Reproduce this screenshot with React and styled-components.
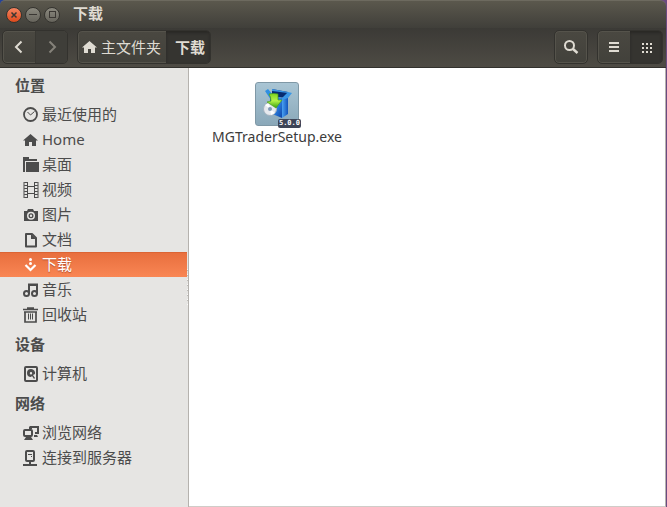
import React, { useState } from 'react'
import { styled, css, createGlobalStyle } from 'styled-components'

const GlobalStyle = createGlobalStyle`
  * {
    box-sizing: border-box;
  }
  body {
    margin: 0;
    background: linear-gradient(90deg, #24439a 50%, #6b4a80 50%);
    font-family: 'Noto Sans', 'Noto Sans CJK SC', sans-serif;
    font-size: 15px;
  }
  button {
    font: inherit;
    margin: 0;
    padding: 0;
    border: none;
    background: none;
  }
`

const Window = styled.div`
  display: flex;
  flex-direction: column;
  min-height: 100vh;
  margin-right: 1px;
`

const TitleBar = styled.header`
  display: flex;
  align-items: center;
  gap: 3px;
  height: 28px;
  padding: 0 6px;
  border-radius: 5px 6px 0 0;
  border-top: 1px solid #6d6a5f;
  background: linear-gradient(#5b584d, #403f3a);
`

const WindowButton = styled.button`
  display: flex;
  width: 16px;
  height: 16px;
  border-radius: 50%;
  border: 1px solid #35342f;
  background: ${(p) =>
    p.$close
      ? 'linear-gradient(#f58460, #dd4a1c)'
      : 'linear-gradient(#8b897f, #66645c)'};

  svg {
    width: 14px;
    height: 14px;
    fill: none;
    stroke: #3a3733;
  }
`

const Title = styled.h1`
  margin: 0 0 0 10px;
  padding-bottom: 3px;
  font-size: 15px;
  line-height: 20px;
  font-weight: bold;
  color: #dfdbd2;
`

const Toolbar = styled.nav`
  display: flex;
  align-items: center;
  gap: 9px;
  height: 40px;
  padding: 0 3px 1px 2px;
  background: linear-gradient(#3b3a36, #4e4b44);
  border-bottom: 1px solid #32312d;
`

const Spacer = styled.div`
  flex: 1;
`

const ButtonGroup = styled.div`
  display: flex;
  height: 34px;
  border: 1px solid #33322e;
  border-radius: 5px;
  overflow: hidden;
  background: linear-gradient(#4a4841, #42413b);
  box-shadow: inset 0 0 0 1px #55534b;
`

const ToolButton = styled.button`
  display: flex;
  align-items: center;
  justify-content: center;
  gap: 3px;
  min-width: 32px;
  padding: ${(p) => (p.$text ? '0 5px 0 4px' : '0')};
  color: #dfdbd2;
  line-height: 20px;

  svg {
    width: 16px;
    height: 16px;
    flex: none;
  }

  ${(p) =>
    p.$dim &&
    css`
      color: #85827a;
      border-left: 1px solid #393833;
      background: #3f3e39;
    `}

  ${(p) =>
    p.$pressed &&
    css`
      padding: ${p.$text ? '0 5px 0 9px' : '0'};
      font-weight: bold;
      background: #353430;
      box-shadow: inset 0 2px 3px #292825;
    `}
`

const Body = styled.div`
  display: flex;
  flex: 1;
`

const Sidebar = styled.aside`
  display: flex;
  flex: none;
  width: 189px;
  background: #e6e5e3;
  border-right: 1px solid #b5b2ae;
`

const Places = styled.div`
  flex: 1;
`

const Handle = styled.div`
  align-self: center;
  width: 1px;
  height: 36px;
  margin-bottom: 2px;
  background: repeating-linear-gradient(#fafafa 0 1px, #bdbbb8 1px 2px, #e6e5e3 2px 5px);
`

const Heading = styled.h2`
  margin: 0;
  padding: 1px 0 1px 15px;
  font-size: 15px;
  line-height: 32px;
  font-weight: bold;
  color: #4c4c4c;
`

const List = styled.ul`
  margin: 0;
  padding: 0;
  list-style: none;
`

const Place = styled.button`
  display: flex;
  align-items: center;
  gap: 3px;
  width: 100%;
  height: 25px;
  padding-left: 23px;
  line-height: 22px;
  color: #4c4c4c;

  svg {
    width: 16px;
    height: 16px;
    flex: none;
  }

  ${(p) =>
    p.$active &&
    css`
      color: #fff;
      background: linear-gradient(#dc6434 1px, #e86f3e 1px, #f98654);
      text-shadow: 0 1px 1px #b55230;
    `}
`

const PlaceLabel = styled.span`
  padding-bottom: 2px;
`

const Content = styled.main`
  flex: 1;
  display: flex;
  align-items: flex-start;
  padding: 14px;
  background: #fff;
  border-right: 1px solid #b5b2ae;
  border-bottom: 1px solid #cfccc8;
`

const File = styled.button`
  display: flex;
  flex-direction: column;
  align-items: center;
  width: 148px;
  color: #3c3c3c;
  font-size: 14px;
  line-height: 22px;
`

const Thumb = styled.span`
  position: relative;
  display: flex;
  width: 44px;
  height: 44px;
  border: 1px solid #7f98a6;
  border-radius: 3px;
  background: linear-gradient(#a9c5d4, #8aa8b9);
`

const Version = styled.span`
  position: absolute;
  right: -3px;
  bottom: -3px;
  padding: 0 1px;
  border-radius: 2px;
  background: #3e4557;
  color: #fff;
  font: bold 7px/9px 'DejaVu Sans Mono', monospace;
`

const icons = {
  recent: (
    <>
      <circle cx="7.5" cy="7.5" r="6.5" fill="none" stroke="currentColor" strokeWidth="1.8" />
      <path d="M4.5 5l3 3 4-3.5" fill="none" stroke="currentColor" />
    </>
  ),
  home: <path d="M7.5 2L0 8.5h2V14h4v-4h3v4h4V8.5h2z" fill="currentColor" />,
  desktop: (
    <>
      <path d="M0 0h6v2h8v2H2v11H0z" fill="currentColor" />
      <path d="M3 5h13v10H3z" fill="currentColor" />
    </>
  ),
  video: (
    <>
      <path d="M1 0v16M4.5 0v16M11.5 0v16M15 0v16M4.5 4.5h7M4.5 11.5h7" fill="none" stroke="currentColor" />
      <path d="M2.7 0v16M13.3 0v16" fill="none" stroke="currentColor" strokeWidth="3" strokeDasharray="1 2" />
    </>
  ),
  picture: (
    <path
      d="M5 2h5l1 2h4v10H1V4h3zM8 4.7a4 4 0 100 8 4 4 0 000-8zm0 1.6a2.5 2.5 0 110 5 2.5 2.5 0 010-5zM8 7.6a1.2 1.2 0 100 2.4 1.2 1.2 0 000-2.4z"
      fill="currentColor"
      fillRule="evenodd"
    />
  ),
  document: (
    <>
      <path d="M3 2h6l4 4v8.5H3z" fill="none" stroke="currentColor" strokeWidth="2" strokeLinejoin="round" />
      <path d="M8 2v5h5z" fill="currentColor" />
    </>
  ),
  download: (
    <>
      <circle cx="7.5" cy="2.5" r="1.5" fill="currentColor" />
      <circle cx="7.5" cy="6.5" r="1.5" fill="currentColor" />
      <path d="M2.5 8l5 5 5-5" fill="none" stroke="currentColor" strokeWidth="2.2" />
    </>
  ),
  music: (
    <>
      <path d="M5 1.5h10V12h-2V4H7v8H5z" fill="currentColor" />
      <circle cx="3.5" cy="11.5" r="2.5" fill="none" stroke="currentColor" strokeWidth="2" />
      <circle cx="11.5" cy="11.5" r="2.5" fill="none" stroke="currentColor" strokeWidth="2" />
    </>
  ),
  trash: (
    <>
      <path d="M0 2.5h15M4 1h7M2 5h11v10H2zM1 5h13" fill="none" stroke="currentColor" strokeWidth="1.7" />
      <path d="M5.5 6.5v6M7.5 6.5v6M9.5 6.5v6" fill="none" stroke="currentColor" />
    </>
  ),
  computer: (
    <>
      <rect x="2" y="1" width="12" height="14" rx="1" fill="none" stroke="currentColor" strokeWidth="2" />
      <path
        d="M8 3a4 4 0 100 8l1-1 2 3 1-1-2-3 2-1a4 4 0 00-4-5zm0 3a1.2 1.2 0 110 2.4A1.2 1.2 0 018 6z"
        fill="currentColor"
        fillRule="evenodd"
      />
    </>
  ),
  network: (
    <>
      <path d="M7 1h9v8h-4V7h2V3H9v1H6V2zM11 10h3l1 2h-4z" fill="currentColor" />
      <rect x="1" y="5" width="8" height="6" rx="1" fill="none" stroke="currentColor" strokeWidth="2" />
      <path d="M3 12h5l2 3H1z" fill="currentColor" />
    </>
  ),
  server: (
    <>
      <rect x="3" y="1" width="8" height="10" rx="1" fill="none" stroke="currentColor" strokeWidth="2" />
      <path d="M5 4h4v1H5zM8 6h1v1H8zM6 12h2v2h6v2H0v-2h6z" fill="currentColor" />
    </>
  ),
  back: <path d="M10.5 2.5L5 8l5.5 5.5" fill="none" stroke="currentColor" strokeWidth="2" />,
  forward: <path d="M5.5 2.5L11 8l-5.5 5.5" fill="none" stroke="currentColor" strokeWidth="2" />,
  search: (
    <>
      <circle cx="6.5" cy="6.5" r="4.5" fill="none" stroke="currentColor" strokeWidth="2" />
      <path d="M10 10l4.5 4" fill="none" stroke="currentColor" strokeWidth="2.5" />
    </>
  ),
  list: <path d="M3 3h10v2H3zM3 7h10v2H3zM3 11h10v2H3z" fill="currentColor" />,
  grid: (
    <path
      d="M4 4h2v2H4zM8 4h2v2H8zM12 4h2v2h-2zM4 8h2v2H4zM8 8h2v2H8zM12 8h2v2h-2zM4 12h2v2H4zM8 12h2v2H8zM12 12h2v2h-2z"
      fill="currentColor"
    />
  ),
}

const Icon = ({ name }) => (
  <svg viewBox="0 0 16 16" aria-hidden="true">
    {icons[name]}
  </svg>
)

const SetupIcon = () => (
  <svg width="42" height="42" viewBox="0 0 42 42" aria-hidden="true">
    <defs>
      <linearGradient id="box" x2="1" y2="1">
        <stop offset="0" stopColor="#0d45a8" />
        <stop offset=".5" stopColor="#2f86e6" />
        <stop offset="1" stopColor="#0d45a8" />
      </linearGradient>
      <linearGradient id="side" x2="1">
        <stop offset="0" stopColor="#4aa2f2" />
        <stop offset="1" stopColor="#1255bd" />
      </linearGradient>
      <linearGradient id="arrow" x2="0" y2="1">
        <stop offset="0" stopColor="#7ed321" />
        <stop offset=".5" stopColor="#b4f24a" />
        <stop offset="1" stopColor="#35a00c" />
      </linearGradient>
    </defs>
    <path d="M9 8l3-2 5 6-2 5z" fill="#2f8fe2" />
    <path d="M16 6l16 3-3 6-13-2z" fill="#082c70" />
    <path d="M14 12l12 3v20l-12-5z" fill="url(#box)" />
    <path d="M26 15l6-3v19l-6 4z" fill="url(#side)" />
    <path d="M26 15l6-6 4 1-4 5-6 2zM16 6l16 3v1L16 8z" fill="#3b97e6" />
    <circle cx="14" cy="26" r="6.5" fill="#e6e9ee" stroke="#a6b3c0" />
    <path d="M14 26l-5-4 4-2zM14 26l5 4-4 2z" fill="#fff" />
    <circle cx="14" cy="26" r="2" fill="#7f99b5" />
    <path d="M13 11q5-1 9 0v6h4l-6 8-9-6 4-1q0-4-2-7z" fill="url(#arrow)" stroke="#479d18" strokeWidth=".7" />
  </svg>
)

const sections = [
  {
    title: '位置',
    items: [
      ['recent', '最近使用的'],
      ['home', 'Home'],
      ['desktop', '桌面'],
      ['video', '视频'],
      ['picture', '图片'],
      ['document', '文档'],
      ['download', '下载'],
      ['music', '音乐'],
      ['trash', '回收站'],
    ],
  },
  { title: '设备', items: [['computer', '计算机']] },
  {
    title: '网络',
    items: [
      ['network', '浏览网络'],
      ['server', '连接到服务器'],
    ],
  },
]

const App = () => {
  const [place, setPlace] = useState('download')
  const [view, setView] = useState('grid')

  return (
    <>
      <GlobalStyle />
      <Window>
        <TitleBar>
          <WindowButton $close aria-label="关闭">
            <svg viewBox="0 0 14 14"><path d="M4.5 4.5l5 5M9.5 4.5l-5 5" strokeWidth="1.5" /></svg>
          </WindowButton>
          <WindowButton aria-label="最小化">
            <svg viewBox="0 0 14 14"><path d="M3 6.5h8" /></svg>
          </WindowButton>
          <WindowButton aria-label="最大化">
            <svg viewBox="0 0 14 14"><rect x="4.5" y="3.5" width="6" height="6" /></svg>
          </WindowButton>
          <Title>下载</Title>
        </TitleBar>

        <Toolbar>
          <ButtonGroup>
            <ToolButton aria-label="后退"><Icon name="back" /></ToolButton>
            <ToolButton $dim aria-label="前进"><Icon name="forward" /></ToolButton>
          </ButtonGroup>
          <ButtonGroup>
            <ToolButton $text>
              <Icon name="home" />
              主文件夹
            </ToolButton>
            <ToolButton $text $pressed>下载</ToolButton>
          </ButtonGroup>
          <Spacer />
          <ButtonGroup>
            <ToolButton aria-label="搜索"><Icon name="search" /></ToolButton>
          </ButtonGroup>
          <ButtonGroup>
            <ToolButton $pressed={view === 'list'} onClick={() => setView('list')} aria-label="列表">
              <Icon name="list" />
            </ToolButton>
            <ToolButton $pressed={view === 'grid'} onClick={() => setView('grid')} aria-label="图标">
              <Icon name="grid" />
            </ToolButton>
          </ButtonGroup>
        </Toolbar>

        <Body>
          <Sidebar>
            <Places>
              {sections.map((section) => (
                <section key={section.title}>
                  <Heading>{section.title}</Heading>
                  <List>
                    {section.items.map(([id, label]) => (
                      <li key={id}>
                        <Place $active={place === id} onClick={() => setPlace(id)}>
                          <Icon name={id} />
                          <PlaceLabel>{label}</PlaceLabel>
                        </Place>
                      </li>
                    ))}
                  </List>
                </section>
              ))}
            </Places>
            <Handle />
          </Sidebar>
          <Content>
            <File>
              <Thumb>
                <SetupIcon />
                <Version>5.0.0</Version>
              </Thumb>
              MGTraderSetup.exe
            </File>
          </Content>
        </Body>
      </Window>
    </>
  )
}

export default App
